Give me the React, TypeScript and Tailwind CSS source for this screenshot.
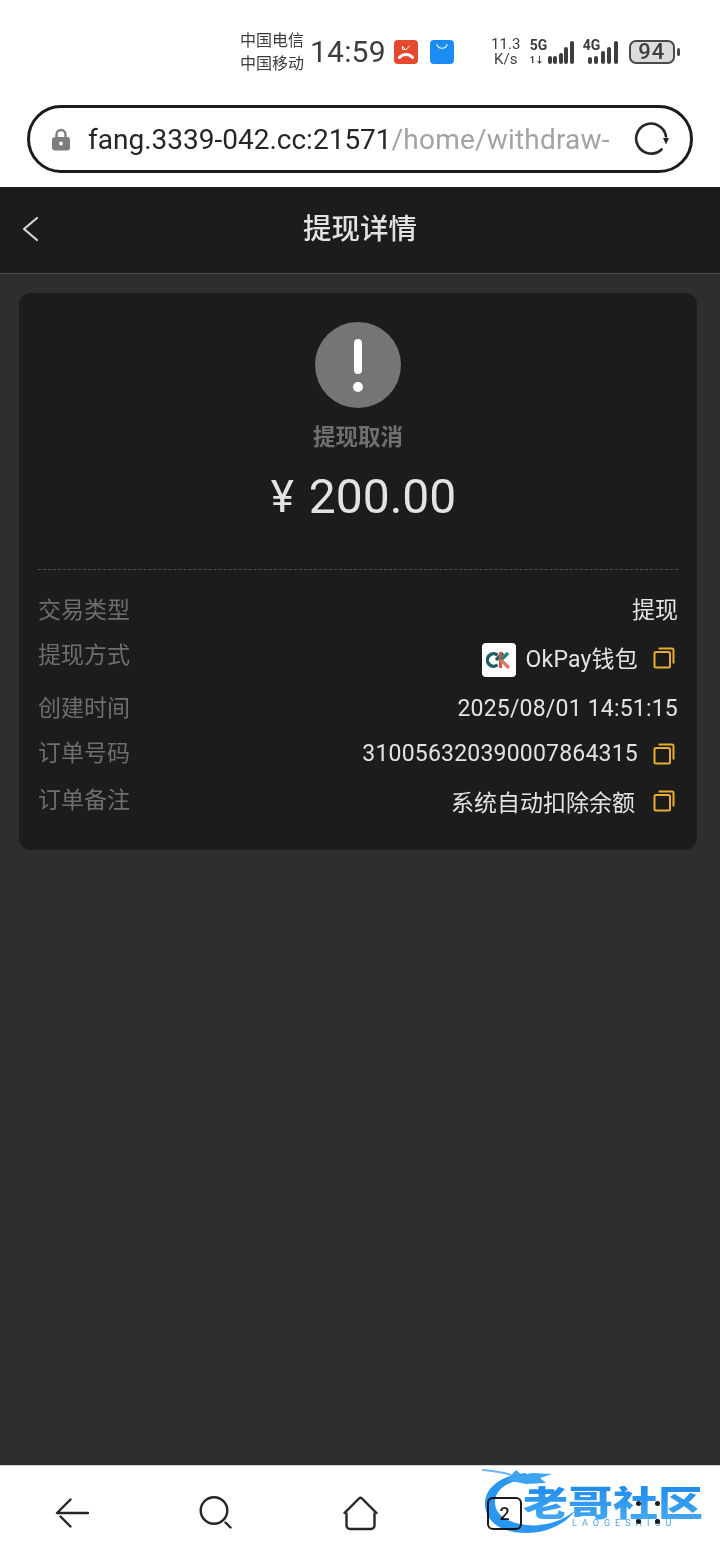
const sans = "font-['Roboto','Noto_Sans_CJK_SC',sans-serif]";

function CopyIcon() {
  return (
    <svg width="22" height="22" viewBox="0 0 22 22" fill="none" stroke="#e5ad35" strokeWidth="2">
      <rect x="1.500" y="5" width="15.500" height="15.500" rx="1.500" />
      <path d="M5.500 1.500H19a1.500 1.500 0 0 1 1.500 1.500v13.500" />
    </svg>
  );
}

function Signal({ bars, className }: { bars: number[]; className: string }) {
  return (
    <div className={`flex items-end ${className}`}>
      {bars.map((h, i) => (
        <div key={i} className="w-[4px] rounded-full bg-[#3d3d3d]" style={{ height: h }} />
      ))}
    </div>
  );
}

function StatusBar() {
  return (
    <div className="flex h-[105px] items-center pb-[1px] pl-[240px] text-[#3d3d3d]">
      <div className="flex flex-col text-[16px] leading-[23px]">
        <span>中国电信</span>
        <span>中国移动</span>
      </div>
      <span className="ml-[6px] text-[30px] leading-none tracking-[0.2px]">14:59</span>
      <div className="ml-[8px] flex h-[24px] w-[24px] items-center justify-center rounded-[4px] bg-[#e2492f]">
        <svg width="18" height="18" viewBox="0 0 18 18" fill="none" stroke="#fff" strokeLinecap="round">
          <path d="M2.500 14.500c3.500-4 9.500-4 13 0" strokeWidth="3" />
          <path d="M5.500 3.500l3 3.500 4-4M5.500 3.500v3h3" strokeWidth="1" />
        </svg>
      </div>
      <div className="ml-[12px] flex h-[24px] w-[24px] items-start justify-center rounded-[4px] bg-[#1b8df2] pt-[3px]">
        <svg width="14" height="8" viewBox="0 0 14 8" fill="none" stroke="#fff" strokeWidth="1.200" strokeLinecap="round">
          <path d="M2 1.500c1 5 9 5 10 0" />
        </svg>
      </div>
      <div className="ml-[36px] flex w-[32px] flex-col items-center text-[15px] leading-[15px]">
        <span>11.3</span>
        <span>K/s</span>
      </div>
      <div className="relative ml-[8px] h-[24px] w-[44px]">
        <span className="absolute left-0 top-[-2px] text-[14px] font-bold leading-[14px]">5G</span>
        <span className="absolute left-0 bottom-[-1px] text-[9px] font-bold leading-[10px]">1↓</span>
        <div className="absolute right-0 bottom-0">
          <Signal bars={[8, 8, 11, 17, 23]} className="gap-[1.500px]" />
        </div>
      </div>
      <div className="relative ml-[9px] h-[24px] w-[35px]">
        <span className="absolute left-0 top-[-2px] text-[14px] font-bold leading-[14px]">4G</span>
        <div className="absolute right-0 bottom-0">
          <Signal bars={[7, 8, 13, 17, 23]} className="gap-[2.500px]" />
        </div>
      </div>
      <div className="ml-[11px] flex h-[24px] w-[46px] items-center justify-center rounded-[7px] border-2 border-[#4a4a4a] bg-[#dcdcdc] text-[22px] font-medium leading-none tracking-[1px]">
        94
      </div>
      <div className="ml-[2px] h-[8px] w-[3px] rounded-full bg-[#4a4a4a]" />
    </div>
  );
}

function UrlBar() {
  return (
    <div className="bg-white px-[27px] pb-[14px]">
      <div className="flex h-[68px] items-center rounded-[34px] border-[3px] border-[#1c1c1c] pl-[21px] pr-[20px]">
        <svg width="20" height="23" viewBox="0 0 20 23" fill="none">
          <path d="M5.500 10V6.500a4.500 4.500 0 0 1 9 0V10" stroke="#7d7d7d" strokeWidth="2.400" />
          <rect x="1" y="9" width="18" height="13.500" rx="3" fill="#7d7d7d" />
          <circle cx="10" cy="15.500" r="2" fill="#fff" />
        </svg>
        <div className="ml-[17px] whitespace-nowrap pt-[1px] text-[28px] leading-none">
          <span className="text-[#262626]">fang.3339-042.cc:21571</span>
          <span className="tracking-[0.2px] text-[#a3a3a3]">/home/withdraw-</span>
        </div>
        <svg className="ml-auto" width="36" height="36" viewBox="0 0 36 36" fill="none" stroke="#262626" strokeWidth="2.600" strokeLinecap="round">
          <path d="M27.500 28.500A15 15 0 1 1 32 15.500" />
          <path d="M29 17h6l-3 6.500z" fill="#262626" stroke="none" />
        </svg>
      </div>
    </div>
  );
}

function Row({ label, children, className }: { label: string; children: React.ReactNode; className?: string }) {
  return (
    <div className={`flex justify-between ${className ?? ""}`}>
      <span className="text-[23px] leading-[32px] text-[#6e6e6e]">{label}</span>
      <div className="flex items-center text-[23px] leading-[32px] text-[#e3e3e3]">{children}</div>
    </div>
  );
}

function OkLogo() {
  return (
    <div className="flex h-[34px] w-[34px] items-center justify-center rounded-[4px] bg-white">
      <svg width="26" height="18" viewBox="0 0 26 18" fill="none" strokeWidth="3.400">
        <path d="M11.500 4.200a6.200 6.200 0 1 0 0 9.600" stroke="#1f5f63" />
        <path d="M10 9 17 2" stroke="#1f5f63" />
        <path d="M14.500 1v16" stroke="#c9574c" strokeWidth="3" />
        <path d="M15 9l7-7" stroke="#2f7f74" />
        <path d="M15 9l8 8" stroke="#d97b62" />
      </svg>
    </div>
  );
}

function DetailCard() {
  return (
    <div className="ml-[19px] mr-[23px] mt-[19px] h-[557px] rounded-[12px] bg-[#1c1c1c] px-[19px]">
      <div className="flex flex-col items-center pt-[29px]">
        <div className="flex h-[86px] w-[86px] flex-col items-center justify-center rounded-full bg-[#757575]">
          <div className="h-[35px] w-[8px] rounded-full bg-white" />
          <div className="mt-[8px] h-[10px] w-[10px] rounded-full bg-white" />
        </div>
        <span className="mt-[13px] text-[22.500px] font-bold leading-[32px] text-[#707070]">提现取消</span>
        <div className="mt-[20px] flex items-center pl-[11px] leading-none text-[#e3e3e3]">
          <span className="text-[44px]">¥</span>
          <span className="ml-[15px] text-[48px]">200.00</span>
        </div>
      </div>
      <div className="mt-[48px] border-t border-dashed border-[#4f4f4f]" />
      <div className="pt-[25px]">
        <Row label="交易类型" className="h-[32px]">
          提现
        </Row>
        <Row label="提现方式" className="mt-[13px] h-[53px]">
          <div className="flex items-center self-start pt-[3px]">
            <OkLogo />
            <span className="ml-[10px] tracking-[0.2px]">OkPay钱包</span>
            <span className="mb-[4px] ml-[15px] mr-[3px]">
              <CopyIcon />
            </span>
          </div>
        </Row>
        <Row label="创建时间" className="h-[32px]">
          <span className="tracking-[0.2px]">2025/08/01 14:51:15</span>
        </Row>
        <Row label="订单号码" className="mt-[13px] h-[32px]">
          <span className="tracking-[0.2px]">310056320390007864315</span>
          <span className="ml-[15px] mr-[3px]">
            <CopyIcon />
          </span>
        </Row>
        <Row label="订单备注" className="mt-[15px] h-[32px]">
          <span className="pt-[6px]">系统自动扣除余额</span>
          <span className="ml-[18px] mr-[3px]">
            <CopyIcon />
          </span>
        </Row>
      </div>
    </div>
  );
}

function Watermark() {
  return (
    <div className="absolute left-[482px] top-[1467px] h-[66px] w-[225px] blur-[0.4px] mix-blend-multiply">
      <svg className="absolute left-0 top-0" width="100" height="68" viewBox="0 0 100 68" fill="#2b96ee">
        <path d="M44 6C20 8 3 20 3 37c0 18 17 29 41 29 20 0 38-8 49-22-13 10-31 16-49 14C24 56 12 46 13 34c1-12 13-20 31-22z" />
        <path d="M24 14 34 3l6 5 10-2 20 1-12 4 6 5-20 1-10-2z" fill="#3da2ef" />
        <path d="M1 3c10 1 20 2 28 5" fill="none" stroke="#6db9f2" strokeWidth="2" strokeLinecap="round" />
      </svg>
      <span className="absolute left-[41px] top-[14px] origin-center scale-y-[0.78] whitespace-nowrap bg-gradient-to-b from-[#1f8cec] to-[#46a9f3] bg-clip-text text-[45px] font-black leading-[46px] text-transparent">
        老哥社区
      </span>
      <span className="absolute left-[90px] top-[50px] whitespace-nowrap text-[9px] leading-[12px] tracking-[5px] text-[#4aa3ee]">
        LAOGESHIOU
      </span>
    </div>
  );
}

function BottomBar() {
  return (
    <div className="relative flex h-[95px] items-start border-t border-[#d0d0d0] bg-white pt-[30px] pl-[55px]">
      <svg className="mt-[2px]" width="34" height="30" viewBox="0 0 34 30" fill="none" stroke="#262626" strokeWidth="2.400" strokeLinecap="round" strokeLinejoin="round">
        <path d="M15.500 1.500 2 15h31M5.500 18.500l10 10" />
      </svg>
      <svg className="ml-[110px]" width="33" height="33" viewBox="0 0 33 33" fill="none" stroke="#262626" strokeWidth="2.400" strokeLinecap="round">
        <circle cx="15" cy="14.500" r="13.300" />
        <path d="m26.500 26.500 5 5" />
      </svg>
      <svg className="ml-[111px]" width="35" height="35" viewBox="0 0 35 35" fill="none" stroke="#262626" strokeWidth="2.400" strokeLinecap="round" strokeLinejoin="round">
        <path d="M1.500 17 16 2.500a2 2 0 0 1 3 0L33.500 17" />
        <path d="M3.500 17.500v12a3.500 3.500 0 0 0 3.500 3.500h21a3.500 3.500 0 0 0 3.500-3.500v-12" />
      </svg>
      <div className="ml-[109px] mt-[1px] flex h-[33px] w-[35px] items-center justify-center rounded-[6px] border-[2.500px] border-[#1c1c1c] text-[18px] font-medium leading-none text-[#1c1c1c]">
        2
      </div>
      <div className="ml-[113.500px] mt-[5px] grid grid-cols-2 gap-x-[14px] gap-y-[13px]">
        <div className="h-[5px] w-[5px] rounded-full bg-[#1c1c1c]" />
        <div className="h-[5px] w-[5px] rounded-full bg-[#1c1c1c]" />
        <div className="h-[5px] w-[5px] rounded-full bg-[#1c1c1c]" />
        <div className="h-[5px] w-[5px] rounded-full bg-[#1c1c1c]" />
      </div>
    </div>
  );
}

export default function App() {
  return (
    <div className={`relative flex h-[1560px] w-[720px] flex-col overflow-hidden bg-white ${sans}`}>
      <StatusBar />
      <UrlBar />
      <div className="flex flex-1 flex-col bg-[#2e2e2e]">
        <div className="relative flex h-[87px] items-center justify-center border-b border-[#4a4a4a] bg-[#1c1c1c]">
          <svg className="absolute left-[22px] top-[29px]" width="18" height="26" viewBox="0 0 18 26" fill="none" stroke="#d8d8d8" strokeWidth="2.200" strokeLinecap="round" strokeLinejoin="round">
            <path d="M15 2 2 13l13 11" />
          </svg>
          <span className="text-[28.500px] font-medium text-[#e3e3e3]">提现详情</span>
        </div>
        <DetailCard />
      </div>
      <BottomBar />
      <Watermark />
    </div>
  );
}
